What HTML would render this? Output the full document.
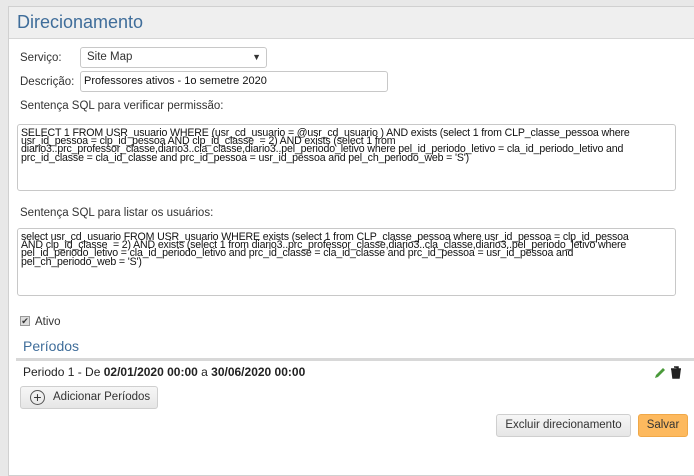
<!DOCTYPE html>
<html><head><meta charset="utf-8"><style>
*{box-sizing:border-box;margin:0;padding:0}
body{width:694px;height:464px;overflow:hidden;background:#e8e8e8;font-family:"Liberation Sans",sans-serif;color:#333;position:relative}
.panel{position:absolute;left:8px;top:6px;width:700px;height:470px;background:#fff;border:1px solid #d0d0d0}
.hdr{position:absolute;left:0;top:0;right:0;height:32px;background:#efefef;border-bottom:1px solid #d6d6d6}
.hdr span{position:absolute;left:8px;top:5px;font-size:18px;color:#3f6d9a}
.a{position:absolute;white-space:nowrap}
.lbl{font-size:11.5px;color:#333}
.box{position:absolute;border:1px solid #c8c8c8;border-radius:3px;background:#fff}
.ta{font-size:10.6px;line-height:8.2px;padding:4px 3px;color:#111;white-space:nowrap;overflow:hidden;letter-spacing:-0.15px}
.btn{position:absolute;border:1px solid #cfcfcf;border-radius:3px;background:linear-gradient(#f6f6f6,#e6e6e6);font-size:11.5px;color:#333;text-align:center;line-height:20px}
</style></head><body>
<div class="panel"><div class="hdr"><span>Direcionamento</span></div></div>
<div class="a lbl" style="left:20px;top:52px">Serviço:</div>
<div class="box" style="left:80px;top:47px;width:187px;height:21px;font-size:11.5px;line-height:19px;padding-left:6px">Site Map<span style="position:absolute;right:5px;top:0;font-size:9px">▼</span></div>
<div class="a lbl" style="left:20px;top:76px">Descrição:</div>
<div class="box" style="left:80px;top:71px;width:308px;height:21px;font-size:11px;line-height:19px;padding-left:3px;color:#111">Professores ativos - 1o semetre 2020</div>
<div class="a lbl" style="left:20px;top:100px">Sentença SQL para verificar permissão:</div>
<div class="box ta" style="left:17px;top:124px;width:659px;height:67px">
<div>SELECT 1 FROM USR_usuario WHERE (usr_cd_usuario = @usr_cd_usuario ) AND exists (select 1 from CLP_classe_pessoa where</div>
<div>usr_id_pessoa = clp_id_pessoa AND clp_id_classe&nbsp; = 2) AND exists (select 1 from</div>
<div>diario3..prc_professor_classe,diario3..cla_classe,diario3..pel_periodo_letivo where pel_id_periodo_letivo = cla_id_periodo_letivo and</div>
<div>prc_id_classe = cla_id_classe and prc_id_pessoa = usr_id_pessoa and pel_ch_periodo_web = 'S')</div></div>
<div class="a lbl" style="left:20px;top:207px">Sentença SQL para listar os usuários:</div>
<div class="box ta" style="left:17px;top:228px;width:659px;height:68px">
<div>select usr_cd_usuario FROM USR_usuario WHERE exists (select 1 from CLP_classe_pessoa where usr_id_pessoa = clp_id_pessoa</div>
<div>AND clp_id_classe&nbsp; = 2) AND exists (select 1 from diario3..prc_professor_classe,diario3..cla_classe,diario3..pel_periodo_letivo where</div>
<div>pel_id_periodo_letivo = cla_id_periodo_letivo and prc_id_classe = cla_id_classe and prc_id_pessoa = usr_id_pessoa and</div>
<div>pel_ch_periodo_web = 'S')</div></div>
<div class="a" style="left:20px;top:316px;width:10px;height:10px;border:1px solid #999;background:#ddd;font-size:9px;line-height:8px;text-align:center">✔</div>
<div class="a lbl" style="left:35px;top:316px">Ativo</div>
<div class="a" style="left:23px;top:338px;font-size:14px;color:#3f6d9a">Períodos</div>
<div class="a" style="left:16px;top:358px;width:678px;height:3px;background:#d8d8d8"></div>
<div class="a" style="left:23px;top:365px;font-size:12px;color:#222">Periodo 1 - De <b>02/01/2020 00:00</b> a <b>30/06/2020 00:00</b></div>
<svg class="a" style="left:653px;top:366px" width="30" height="13" viewBox="0 0 30 13"><path d="M2 12 L3 9 L10 2 L12 4 L5 11 Z" fill="#4a9a3a"/><path d="M18 3 h10 M19 4 l1 8 h6 l1 -8 Z M21 1 h4 v2" stroke="#222" stroke-width="1.5" fill="#222"/></svg>
<div class="btn" style="left:20px;top:386px;width:138px;height:23px;text-align:left;padding-left:32px">Adicionar Períodos<span style="position:absolute;left:9px;top:3px;width:15px;height:15px;border:1.3px solid #555;border-radius:50%;line-height:12px;text-align:center;font-size:14px;padding:0">+</span></div>
<div class="btn" style="left:496px;top:414px;width:135px;height:23px">Excluir direcionamento</div>
<div class="btn" style="left:638px;top:414px;width:50px;height:23px;background:#fdb95e;border-color:#f0a848">Salvar</div>
</body></html>
